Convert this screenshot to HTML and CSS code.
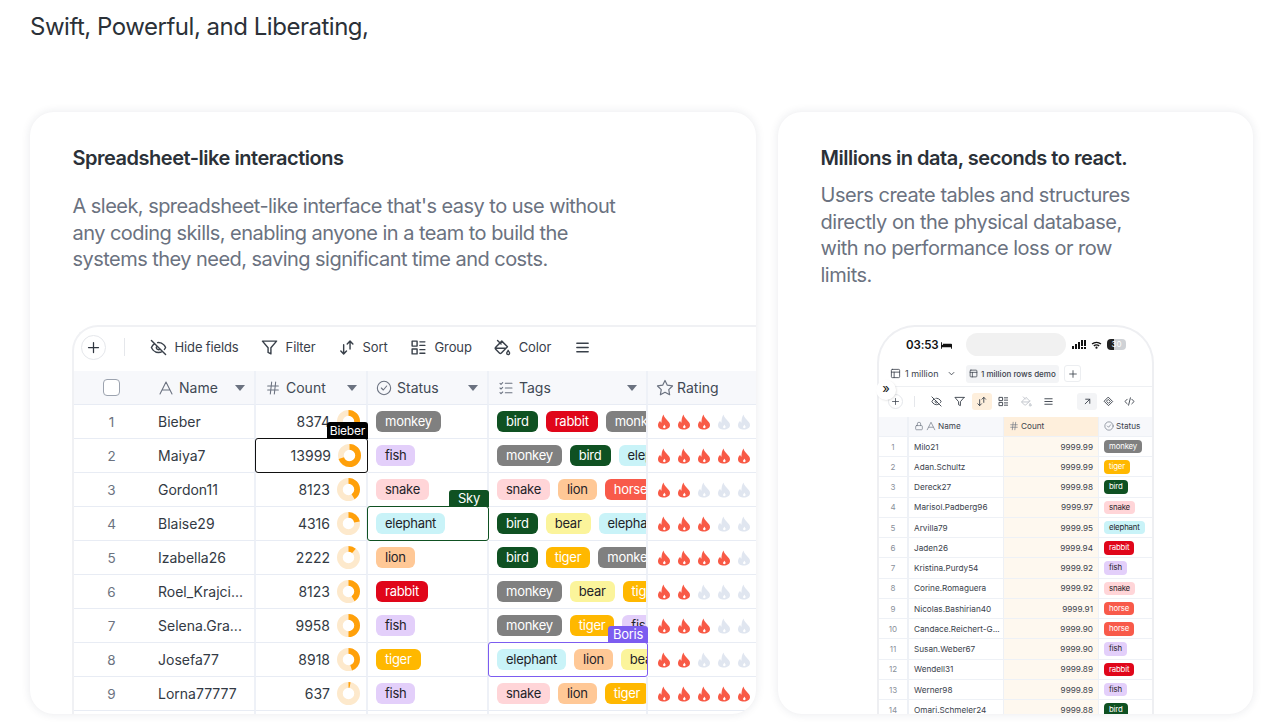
FILE: index.html
```html
<!DOCTYPE html>
<html lang="en">
<head>
    <meta charset="UTF-8">
    <title>Swift, Powerful, and Liberating</title>
    <meta name="viewport" content="width=device-width, initial-scale=1.0">
    <link rel="stylesheet" href="styles.css">
</head>
<body>
    <!-- shared icons -->
    <svg class="defs" width="0" height="0">
        <symbol id="i-plus" viewBox="0 0 24 24"><path d="M12 4v16M4 12h16"/></symbol>
        <symbol id="i-eyeoff" viewBox="0 0 24 24"><path d="M9.88 9.88a3 3 0 1 0 4.24 4.24M10.73 5.08A10.43 10.43 0 0 1 12 5c7 0 10 7 10 7a13.16 13.16 0 0 1-1.67 2.68M6.61 6.61A13.526 13.526 0 0 0 2 12s3 7 10 7a9.74 9.74 0 0 0 5.39-1.61M2 2l20 20"/></symbol>
        <symbol id="i-filter" viewBox="0 0 24 24"><path d="M22 3H2l8 9.46V19l4 2v-8.54L22 3z"/></symbol>
        <symbol id="i-sort" viewBox="0 0 24 24"><path d="M8 8v13M4 17l4 4 4-4M17 3v11M13 7l4-4 4 4"/></symbol>
        <symbol id="i-group" viewBox="0 0 24 24"><path d="M3 3h7v7H3zM3 14h7v7H3zM14 4h7M14 9h7M14 15h7M14 20h7"/></symbol>
        <symbol id="i-color" viewBox="0 0 24 24"><path d="m19 11-8-8-8.6 8.6a2 2 0 0 0 0 2.8l5.2 5.2c.8.8 2 .8 2.8 0L19 11ZM5 2l5 5M2 13h15M22 20a2 2 0 1 1-4 0c0-1.6 1.7-2.4 2-4 .3 1.6 2 2.4 2 4Z"/></symbol>
        <symbol id="i-menu" viewBox="0 0 24 24"><path d="M4 6h16M4 12h16M4 18h16"/></symbol>
        <symbol id="i-text" viewBox="0 0 24 24"><path d="M3 21 12 3l9 18M7 15h10"/></symbol>
        <symbol id="i-hash" viewBox="0 0 24 24"><path d="M4 9h16M4 15h16M10 3 8 21M16 3l-2 18"/></symbol>
        <symbol id="i-check" viewBox="0 0 24 24"><circle cx="12" cy="12" r="10"/><path d="m8 12 3 3 5-6"/></symbol>
        <symbol id="i-list" viewBox="0 0 24 24"><path d="M11 5h10M11 12h10M11 19h10M3 5l1.5 1.5L7 4M3 12l1.5 1.5L7 11M3 19l1.5 1.5L7 18"/></symbol>
        <symbol id="i-star" viewBox="0 0 24 24"><path d="m12 2 3.09 6.26L22 9.27l-5 4.87 1.18 6.88L12 17.77l-6.18 3.25L7 14.14 2 9.27l6.91-1.01L12 2z"/></symbol>
        <symbol id="i-lock" viewBox="0 0 24 24"><rect x="4" y="11" width="16" height="10" rx="2"/><path d="M8 11V7a4 4 0 0 1 8 0v4"/></symbol>
        <symbol id="i-table" viewBox="0 0 24 24"><rect x="3" y="3" width="18" height="18" rx="2"/><path d="M3 9h18M9 9v12"/></symbol>
        <symbol id="i-flame" viewBox="0 0 14 16"><path fill-rule="evenodd" d="M6.500.5c.5 2.500 2 3.700 3.500 5.500 1.300 1.500 3 3 3 5 0 2.800-2.700 4.500-6 4.500S1 14.300 1 11.300c0-2 .9-3.500 2.200-4.600.1 1 .5 1.700 1.200 2.100C4.500 5.500 5 2.500 6.500.5zM7.500 10.500c-.2 1-1.500 1.600-1.500 2.600 0 .7.600 1.100 1.300 1.100s1.300-.5 1.300-1.200c0-1-.8-1.500-1.100-2.500z"/></symbol>
    </svg>

    <h1 class="lead">Swift, Powerful, and Liberating,</h1>

    <div class="cards">
        <section class="card card-wide">
            <h2>Spreadsheet-like interactions</h2>
            <p class="desc">A sleek, spreadsheet-like interface that's easy to use without any coding skills, enabling anyone in a team to build the systems they need, saving significant time and costs.</p>

            <div class="sheet">
                <div class="toolbar">
                    <span class="round-btn"><svg class="ico"><use href="#i-plus"/></svg></span>
                    <span class="divider"></span>
                    <span class="tool"><svg class="ico"><use href="#i-eyeoff"/></svg>Hide fields</span>
                    <span class="tool"><svg class="ico"><use href="#i-filter"/></svg>Filter</span>
                    <span class="tool"><svg class="ico"><use href="#i-sort"/></svg>Sort</span>
                    <span class="tool"><svg class="ico"><use href="#i-group"/></svg>Group</span>
                    <span class="tool"><svg class="ico"><use href="#i-color"/></svg>Color</span>
                    <span class="tool"><svg class="ico"><use href="#i-menu"/></svg></span>
                </div>

                <div class="row head">
                    <div class="cell num"><span class="checkbox"></span></div>
                    <div class="cell"><svg class="ico"><use href="#i-text"/></svg>Name<i class="caret"></i></div>
                    <div class="cell"><svg class="ico"><use href="#i-hash"/></svg>Count<i class="caret"></i></div>
                    <div class="cell"><svg class="ico"><use href="#i-check"/></svg>Status<i class="caret"></i></div>
                    <div class="cell"><svg class="ico"><use href="#i-list"/></svg>Tags<i class="caret"></i></div>
                    <div class="cell"><svg class="ico star"><use href="#i-star"/></svg>Rating</div>
                </div>

                <div class="row">
                    <div class="cell num">1</div>
                    <div class="cell name">Bieber</div>
                    <div class="cell count">8374<svg class="donut" viewBox="0 0 24 24"><circle class="track" cx="12" cy="12" r="9"/><circle class="arc" cx="12" cy="12" r="9" pathLength="100" stroke-dasharray="42 100"/></svg></div>
                    <div class="cell tags"><span class="tag monkey">monkey</span></div>
                    <div class="cell tags"><span class="tag bird">bird</span><span class="tag rabbit">rabbit</span><span class="tag monkey">monkey</span></div>
                    <div class="cell rating"><svg class="fl on"><use href="#i-flame"/></svg><svg class="fl on"><use href="#i-flame"/></svg><svg class="fl on"><use href="#i-flame"/></svg><svg class="fl"><use href="#i-flame"/></svg><svg class="fl"><use href="#i-flame"/></svg></div>
                </div>
                <div class="row">
                    <div class="cell num">2</div>
                    <div class="cell name">Maiya7</div>
                    <div class="cell count sel sel-black"><span class="who who-black">Bieber</span>13999<svg class="donut" viewBox="0 0 24 24"><circle class="track" cx="12" cy="12" r="9"/><circle class="arc" cx="12" cy="12" r="9" pathLength="100" stroke-dasharray="70 100"/></svg></div>
                    <div class="cell tags"><span class="tag fish">fish</span></div>
                    <div class="cell tags"><span class="tag monkey">monkey</span><span class="tag bird">bird</span><span class="tag elephant">elephant</span></div>
                    <div class="cell rating"><svg class="fl on"><use href="#i-flame"/></svg><svg class="fl on"><use href="#i-flame"/></svg><svg class="fl on"><use href="#i-flame"/></svg><svg class="fl on"><use href="#i-flame"/></svg><svg class="fl on"><use href="#i-flame"/></svg></div>
                </div>
                <div class="row">
                    <div class="cell num">3</div>
                    <div class="cell name">Gordon11</div>
                    <div class="cell count">8123<svg class="donut" viewBox="0 0 24 24"><circle class="track" cx="12" cy="12" r="9"/><circle class="arc" cx="12" cy="12" r="9" pathLength="100" stroke-dasharray="41 100"/></svg></div>
                    <div class="cell tags"><span class="tag snake">snake</span></div>
                    <div class="cell tags"><span class="tag snake">snake</span><span class="tag lion">lion</span><span class="tag horse">horse</span></div>
                    <div class="cell rating"><svg class="fl on"><use href="#i-flame"/></svg><svg class="fl on"><use href="#i-flame"/></svg><svg class="fl"><use href="#i-flame"/></svg><svg class="fl"><use href="#i-flame"/></svg><svg class="fl"><use href="#i-flame"/></svg></div>
                </div>
                <div class="row">
                    <div class="cell num">4</div>
                    <div class="cell name">Blaise29</div>
                    <div class="cell count">4316<svg class="donut" viewBox="0 0 24 24"><circle class="track" cx="12" cy="12" r="9"/><circle class="arc" cx="12" cy="12" r="9" pathLength="100" stroke-dasharray="22 100"/></svg></div>
                    <div class="cell tags sel sel-green"><span class="who who-green">Sky</span><span class="tag elephant">elephant</span></div>
                    <div class="cell tags"><span class="tag bird">bird</span><span class="tag bear">bear</span><span class="tag elephant">elephant</span></div>
                    <div class="cell rating"><svg class="fl on"><use href="#i-flame"/></svg><svg class="fl on"><use href="#i-flame"/></svg><svg class="fl on"><use href="#i-flame"/></svg><svg class="fl"><use href="#i-flame"/></svg><svg class="fl"><use href="#i-flame"/></svg></div>
                </div>
                <div class="row">
                    <div class="cell num">5</div>
                    <div class="cell name">Izabella26</div>
                    <div class="cell count">2222<svg class="donut" viewBox="0 0 24 24"><circle class="track" cx="12" cy="12" r="9"/><circle class="arc" cx="12" cy="12" r="9" pathLength="100" stroke-dasharray="11 100"/></svg></div>
                    <div class="cell tags"><span class="tag lion">lion</span></div>
                    <div class="cell tags"><span class="tag bird">bird</span><span class="tag tiger">tiger</span><span class="tag monkey">monkey</span></div>
                    <div class="cell rating"><svg class="fl on"><use href="#i-flame"/></svg><svg class="fl on"><use href="#i-flame"/></svg><svg class="fl on"><use href="#i-flame"/></svg><svg class="fl on"><use href="#i-flame"/></svg><svg class="fl"><use href="#i-flame"/></svg></div>
                </div>
                <div class="row">
                    <div class="cell num">6</div>
                    <div class="cell name">Roel_Krajci...</div>
                    <div class="cell count">8123<svg class="donut" viewBox="0 0 24 24"><circle class="track" cx="12" cy="12" r="9"/><circle class="arc" cx="12" cy="12" r="9" pathLength="100" stroke-dasharray="41 100"/></svg></div>
                    <div class="cell tags"><span class="tag rabbit">rabbit</span></div>
                    <div class="cell tags"><span class="tag monkey">monkey</span><span class="tag bear">bear</span><span class="tag tiger">tiger</span></div>
                    <div class="cell rating"><svg class="fl on"><use href="#i-flame"/></svg><svg class="fl on"><use href="#i-flame"/></svg><svg class="fl"><use href="#i-flame"/></svg><svg class="fl"><use href="#i-flame"/></svg><svg class="fl"><use href="#i-flame"/></svg></div>
                </div>
                <div class="row">
                    <div class="cell num">7</div>
                    <div class="cell name">Selena.Gra...</div>
                    <div class="cell count">9958<svg class="donut" viewBox="0 0 24 24"><circle class="track" cx="12" cy="12" r="9"/><circle class="arc" cx="12" cy="12" r="9" pathLength="100" stroke-dasharray="50 100"/></svg></div>
                    <div class="cell tags"><span class="tag fish">fish</span></div>
                    <div class="cell tags"><span class="tag monkey">monkey</span><span class="tag tiger">tiger</span><span class="tag fish">fish</span></div>
                    <div class="cell rating"><svg class="fl on"><use href="#i-flame"/></svg><svg class="fl on"><use href="#i-flame"/></svg><svg class="fl on"><use href="#i-flame"/></svg><svg class="fl"><use href="#i-flame"/></svg><svg class="fl"><use href="#i-flame"/></svg></div>
                </div>
                <div class="row">
                    <div class="cell num">8</div>
                    <div class="cell name">Josefa77</div>
                    <div class="cell count">8918<svg class="donut" viewBox="0 0 24 24"><circle class="track" cx="12" cy="12" r="9"/><circle class="arc" cx="12" cy="12" r="9" pathLength="100" stroke-dasharray="45 100"/></svg></div>
                    <div class="cell tags"><span class="tag tiger">tiger</span></div>
                    <div class="cell tags sel sel-purple"><span class="who who-purple">Boris</span><div class="clip"><span class="tag elephant">elephant</span><span class="tag lion">lion</span><span class="tag bear">bear</span></div></div>
                    <div class="cell rating"><svg class="fl on"><use href="#i-flame"/></svg><svg class="fl on"><use href="#i-flame"/></svg><svg class="fl"><use href="#i-flame"/></svg><svg class="fl"><use href="#i-flame"/></svg><svg class="fl"><use href="#i-flame"/></svg></div>
                </div>
                <div class="row">
                    <div class="cell num">9</div>
                    <div class="cell name">Lorna77777</div>
                    <div class="cell count">637<svg class="donut" viewBox="0 0 24 24"><circle class="track" cx="12" cy="12" r="9"/><circle class="arc" cx="12" cy="12" r="9" pathLength="100" stroke-dasharray="3 100"/></svg></div>
                    <div class="cell tags"><span class="tag fish">fish</span></div>
                    <div class="cell tags"><span class="tag snake">snake</span><span class="tag lion">lion</span><span class="tag tiger">tiger</span></div>
                    <div class="cell rating"><svg class="fl on"><use href="#i-flame"/></svg><svg class="fl on"><use href="#i-flame"/></svg><svg class="fl on"><use href="#i-flame"/></svg><svg class="fl on"><use href="#i-flame"/></svg><svg class="fl on"><use href="#i-flame"/></svg></div>
                </div>
                <div class="row">
                    <div class="cell num"></div><div class="cell"></div><div class="cell"></div><div class="cell"></div><div class="cell"></div><div class="cell"></div>
                </div>
            </div>
        </section>

        <section class="card card-narrow">
            <h2>Millions in data, seconds to react.</h2>
            <p class="desc">Users create tables and structures directly on the physical database, with no performance loss or row limits.</p>

            <div class="phone">
                <div class="status-bar">
                    <span class="time">03:53</span>
                    <svg class="bed" viewBox="0 0 12 8"><path d="M0 8V1h1v3h1V2.500h9A1 1 0 0 1 12 3.500V8h-1V6.500H1V8z"/></svg>
                    <span class="island"></span>
                    <svg class="signal" viewBox="0 0 14 9"><path d="M0 6h2v3H0zM3 4h2v5H3zM6 2h2v7H6zM9 0h2v6H9zM9 7h2v2H9zM12 0h2v6h-2zM12 7h2v2h-2z"/></svg>
                    <svg class="wifi" viewBox="0 0 24 18"><path d="M2 7a15 15 0 0 1 20 0M6 11a10 10 0 0 1 12 0"/><circle cx="12" cy="15" r="2.500"/></svg>
                    <span class="battery">30</span>
                </div>
                <div class="tabs">
                    <svg class="ico"><use href="#i-table"/></svg>
                    <span class="tab-name">1 million</span>
                    <svg class="tab-arrow" viewBox="0 0 8 5"><path d="m1 1 3 3 3-3"/></svg>
                    <span class="tab-chip"><svg class="ico"><use href="#i-table"/></svg>1 million rows demo</span>
                    <span class="tab-add"><svg class="ico"><use href="#i-plus"/></svg></span>
                </div>
                <span class="expand">»</span>
                <div class="ptools">
                    <span class="round-btn small"><svg class="ico"><use href="#i-plus"/></svg></span>
                    <span class="divider small"></span>
                    <span class="ptool"><svg class="ico"><use href="#i-eyeoff"/></svg></span>
                    <span class="ptool"><svg class="ico"><use href="#i-filter"/></svg></span>
                    <span class="ptool active"><svg class="ico"><use href="#i-sort"/></svg></span>
                    <span class="ptool"><svg class="ico"><use href="#i-group"/></svg></span>
                    <span class="ptool faded"><svg class="ico"><use href="#i-color"/></svg></span>
                    <span class="ptool"><svg class="ico"><use href="#i-menu"/></svg></span>
                    <span class="ptools-right">
                        <span class="ptool grey"><svg class="ico" viewBox="0 0 24 24"><path d="M7 17 17 7M8 7h9v9"/></svg></span>
                        <span class="ptool"><svg class="ico" viewBox="0 0 24 24"><path d="m12 3 9 9-9 9-9-9zM12 8l4 4-4 4-4-4z"/></svg></span>
                        <span class="ptool"><svg class="ico" viewBox="0 0 24 24"><path d="m7 7-5 5 5 5M17 7l5 5-5 5M14 4l-4 16"/></svg></span>
                    </span>
                </div>

                <div class="prow phead">
                    <div class="pcell"></div>
                    <div class="pcell"><svg class="ico"><use href="#i-lock"/></svg><svg class="ico"><use href="#i-text"/></svg>Name</div>
                    <div class="pcell hot"><svg class="ico"><use href="#i-hash"/></svg>Count</div>
                    <div class="pcell"><svg class="ico"><use href="#i-check"/></svg>Status</div>
                </div>
                <div class="prow"><div class="pcell pnum">1</div><div class="pcell">Milo21</div><div class="pcell pcount">9999.99</div><div class="pcell"><span class="tag monkey">monkey</span></div></div>
                <div class="prow"><div class="pcell pnum">2</div><div class="pcell">Adan.Schultz</div><div class="pcell pcount">9999.99</div><div class="pcell"><span class="tag tiger">tiger</span></div></div>
                <div class="prow"><div class="pcell pnum">3</div><div class="pcell">Dereck27</div><div class="pcell pcount">9999.98</div><div class="pcell"><span class="tag bird">bird</span></div></div>
                <div class="prow"><div class="pcell pnum">4</div><div class="pcell">Marisol.Padberg96</div><div class="pcell pcount">9999.97</div><div class="pcell"><span class="tag snake">snake</span></div></div>
                <div class="prow"><div class="pcell pnum">5</div><div class="pcell">Arvilla79</div><div class="pcell pcount">9999.95</div><div class="pcell"><span class="tag elephant">elephant</span></div></div>
                <div class="prow"><div class="pcell pnum">6</div><div class="pcell">Jaden26</div><div class="pcell pcount">9999.94</div><div class="pcell"><span class="tag rabbit">rabbit</span></div></div>
                <div class="prow"><div class="pcell pnum">7</div><div class="pcell">Kristina.Purdy54</div><div class="pcell pcount">9999.92</div><div class="pcell"><span class="tag fish">fish</span></div></div>
                <div class="prow"><div class="pcell pnum">8</div><div class="pcell">Corine.Romaguera</div><div class="pcell pcount">9999.92</div><div class="pcell"><span class="tag snake">snake</span></div></div>
                <div class="prow"><div class="pcell pnum">9</div><div class="pcell">Nicolas.Bashirian40</div><div class="pcell pcount">9999.91</div><div class="pcell"><span class="tag horse">horse</span></div></div>
                <div class="prow"><div class="pcell pnum">10</div><div class="pcell">Candace.Reichert-G...</div><div class="pcell pcount">9999.90</div><div class="pcell"><span class="tag horse">horse</span></div></div>
                <div class="prow"><div class="pcell pnum">11</div><div class="pcell">Susan.Weber67</div><div class="pcell pcount">9999.90</div><div class="pcell"><span class="tag fish">fish</span></div></div>
                <div class="prow"><div class="pcell pnum">12</div><div class="pcell">Wendell31</div><div class="pcell pcount">9999.89</div><div class="pcell"><span class="tag rabbit">rabbit</span></div></div>
                <div class="prow"><div class="pcell pnum">13</div><div class="pcell">Werner98</div><div class="pcell pcount">9999.89</div><div class="pcell"><span class="tag fish">fish</span></div></div>
                <div class="prow"><div class="pcell pnum">14</div><div class="pcell">Omari.Schmeler24</div><div class="pcell pcount">9999.88</div><div class="pcell"><span class="tag bird">bird</span></div></div>
            </div>
        </section>
    </div>
</body>
</html>
```

FILE: styles.css
```css
* { box-sizing: border-box; }
html, body { height: 100%; }
body { margin: 0; padding: 0 27px 0 30px; background: #fff; color: #1f2937; font-family: Inter, "Liberation Sans", sans-serif; overflow: hidden; }
.defs { position: absolute; }

.lead { margin: 0; height: 112px; padding-top: 12px; font-size: 24px; line-height: 30px; font-weight: 400; color: #2b3138; letter-spacing: -.02em; }
.cards { display: flex; gap: 22px; height: 602px; }
.card { background: #fff; border-radius: 24px; box-shadow: 0 0 10px rgba(30, 40, 70, .1); overflow: hidden; padding: 34px 0 0 42.5px; }
.card-wide { width: 726px; flex: none; }
.card-narrow { flex: 1; padding-right: 42.5px; }
.card h2 { margin: 0 0 23px; font-size: 20px; line-height: 24px; font-weight: 600; color: #2b3138; letter-spacing: -.024em; }
.card-narrow h2 { margin-bottom: 12px; }
.desc { margin: 0; font-size: 20px; line-height: 26.67px; color: #6b7280; max-width: 560px; letter-spacing: -.027em; }
.card-narrow .desc { max-width: 330px; letter-spacing: -.024em; }

/* spreadsheet */
.sheet { margin: 52px 0 0 -.5px; border: 2px solid #f0f1f4; border-width: 2px 0 0 2px; border-top-left-radius: 26px; font-size: 14px; color: #333a44; }
.ico { fill: none; stroke: currentColor; stroke-width: 2; stroke-linecap: round; stroke-linejoin: round; flex: none; }
.toolbar { display: flex; align-items: center; height: 44px; padding: 0 0 4px 7px; color: #2f3640; }
.toolbar .ico { width: 17px; height: 17px; }
.round-btn { display: flex; align-items: center; justify-content: center; width: 25px; height: 25px; border: 1px solid #e5e7eb; border-radius: 50%; }
.toolbar .round-btn .ico { width: 15px; height: 15px; }
.divider { width: 1px; height: 18px; margin: 0 25px 0 18px; background: #e5e7eb; }
.tool { display: flex; align-items: center; gap: 7.5px; margin-right: 22.5px; font-size: 13px; letter-spacing: -.01em; color: #39404a; }

.row { display: grid; grid-template-columns: 74px 108px 112px 121px 159px 1fr; height: 34px; }
.head { background: #f7f8fb; font-size: 14px; color: #414954; }
.cell { position: relative; display: flex; align-items: center; min-width: 0; padding: 0 8px; border-bottom: 1px solid #e8ecf4; border-right: 2px solid #eef1f7; white-space: nowrap; }
.cell.num { justify-content: center; padding: 0 0 0 1px; border-right: 0; color: #6b7280; font-size: 13.5px; }
.cell:last-child { border-right: 0; }
.cell.name { padding-left: 10px; }
.cell.count { justify-content: flex-end; gap: 7px; padding-right: 6px; font-size: 14px; }
.head .cell { padding-left: 11px; gap: 5px; }
.head .cell.num { padding: 0; }
.head .cell:nth-child(2) { padding-left: 10px; }
.head .cell:nth-child(3) { padding-left: 9px; }
.head .cell:nth-child(4) { padding-left: 8px; }
.head .cell:nth-child(5) { padding-left: 9px; }
.head .cell:nth-child(6) { padding-left: 8px; gap: 3px; }
.head .ico { width: 16px; height: 16px; stroke-width: 1.6; color: #6b7280; }
.head .ico.star { width: 18px; height: 18px; }
.checkbox { width: 17px; height: 17px; border: 1.5px solid #9ca3af; border-radius: 4px; background: #fff; }
.caret { margin-left: auto; margin-right: 1px; width: 0; height: 0; border: 5px solid transparent; border-top: 6px solid #6b7280; border-bottom: 0; }

.donut { width: 23px; height: 23px; flex: none; fill: none; stroke-width: 6; transform: rotate(-90deg); }
.donut .track { stroke: #fde9cc; }
.donut .arc { stroke: #ffa00a; }

.tags { gap: 8px; overflow: hidden; }
.clip { display: flex; gap: 8px; overflow: hidden; min-width: 0; }
.tag { flex: none; display: inline-block; height: 21px; line-height: 21px; padding: 0 9px; border-radius: 6px; font-size: 13px; letter-spacing: -.02em; color: #1f2329; }
.monkey { background: #808080; color: #fff; }
.bird { background: #0f5122; color: #fff; }
.rabbit { background: #e0061a; color: #fff; }
.fish { background: #e3cffa; }
.snake { background: #ffd5d8; }
.lion { background: #ffc896; }
.tiger { background: #ffb800; color: #fff; }
.elephant { background: #c9f3f8; }
.bear { background: #fbf49b; }
.horse { background: #f85a4a; color: #fff; }

.rating { gap: 6px; padding-left: 9px; }
.fl { width: 14px; height: 16px; flex: none; fill: #e0e6f0; }
.fl.on { fill: #f85a46; }

/* cursors on other users' cells */
.sel { overflow: visible; z-index: 2; border: 1px solid; border-radius: 3px; margin: -1px 0 0 -1px; }
.sel-black { border-color: #111; }
.sel-green { border-color: #0f5122; }
.sel-purple { border-color: #7c5cf0; padding-right: 0; }
.who { position: absolute; right: -1px; bottom: 100%; height: 17px; padding: 0 3px; line-height: 17px; border-radius: 3px 3px 0 0; color: #fff; font-size: 12px; letter-spacing: -.02em; }
.who-black { background: #000; }
.who-green { background: #0f5122; padding: 0 9px; font-size: 13px; }
.who-purple { background: #7c5cf0; padding: 0 5px; font-size: 13px; }

/* phone */
.phone { position: relative; width: 277px; margin: 36px auto 0; border: 2px solid #eeeff2; border-bottom: 0; border-radius: 38px 38px 0 0; font-size: 8.2px; color: #3b424c; }
.status-bar { display: flex; align-items: center; height: 35px; padding: 1px 0 0 27px; }
.time { width: 31px; font-size: 11.5px; font-weight: 600; color: #111; letter-spacing: -.01em; }
.bed { width: 11px; height: 8px; margin-left: 4px; fill: #111; }
.island { width: 100px; height: 23px; margin-left: 14px; border-radius: 12px; background: #f1f1f1; }
.signal { width: 14px; height: 9px; margin-left: 6px; fill: #111; }
.wifi { width: 11px; height: 8px; margin-left: 5px; fill: none; stroke: #111; stroke-width: 3; }
.wifi circle { fill: #111; stroke: none; }
.battery { width: 19px; height: 11px; margin-left: 5px; border-radius: 4px; background: linear-gradient(90deg, #222 35%, #cfd2d6 35%); color: #fff; font-size: 8px; line-height: 11px; text-align: center; }
.tabs { display: flex; align-items: center; height: 25px; padding-left: 11px; border-bottom: 1px solid #eef0f3; font-size: 9px; }
.tabs > .ico { width: 11px; height: 11px; stroke-width: 1.8; }
.tab-name { margin-left: 4px; }
.tab-arrow { width: 7px; height: 5px; margin-left: 9px; fill: none; stroke: #3b424c; }
.tab-chip { display: flex; align-items: center; gap: 3px; height: 18px; margin-left: 11px; padding: 0 3.5px; border-radius: 3px; background: #f3f4f6; font-size: 8px; font-weight: 500; white-space: nowrap; }
.tab-chip .ico { width: 9px; height: 9px; }
.tab-add { display: flex; align-items: center; justify-content: center; width: 17px; height: 17px; margin-left: 5px; border: 1px solid #eceef1; border-radius: 3px; }
.tab-add .ico { width: 10px; height: 10px; }
.expand { position: absolute; left: -3px; top: 53px; z-index: 2; width: 20px; height: 20px; border-radius: 50%; background: #fff; box-shadow: 1px 1px 2px rgba(0, 0, 0, .1); color: #111; font-size: 13px; line-height: 17px; text-align: center; }
.ptools { display: flex; align-items: center; gap: 2.4px; height: 30px; padding-left: 9px; }
.round-btn.small { width: 15px; height: 15px; flex: none; }
.round-btn.small .ico { width: 9px; height: 9px; }
.divider.small { height: 11px; margin: 0 9px 0 9px; flex: none; }
.ptool { display: flex; align-items: center; justify-content: center; width: 20px; height: 17px; border-radius: 3px; flex: none; }
.ptool .ico { width: 11px; height: 11px; }
.ptool.active { background: #feefdc; }
.ptool.faded { color: #bfc4cb; }
.ptool.grey { background: #f3f4f6; }
.ptools-right { display: flex; gap: 1px; margin-left: auto; padding-right: 13px; }

.prow { display: grid; grid-template-columns: 30px 95px 95px 1fr; height: 20.25px; }
.phead { background: #f7f8fb; }
.pcell { display: flex; align-items: center; gap: 2px; min-width: 0; padding: 0 5px; border-bottom: 1px solid #eef1f6; border-right: 1px solid #eef1f6; white-space: nowrap; }
.pcell:first-child { border-right: 2px solid #eef1f6; }
.pcell:last-child { border-right: 0; }
.pcell .ico { width: 10px; height: 10px; stroke-width: 1.6; color: #6b7280; }
.pnum { justify-content: center; color: #8a909a; font-size: 8px; }
.hot { background: #feefdc; }
.pcount { justify-content: flex-end; background: #fef8ef; }
.phone .tag { height: 13.5px; line-height: 13.5px; padding: 0 5px; border-radius: 4px; font-size: 7.8px; }
```
